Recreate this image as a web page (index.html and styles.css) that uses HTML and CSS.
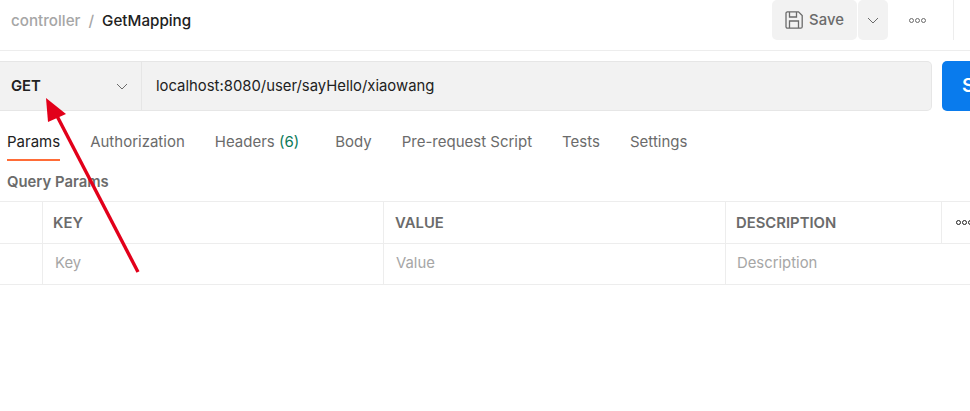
FILE: index.html
```html
<!DOCTYPE html>
<html lang="en">
<head>
    <meta charset="UTF-8">
    <title>GetMapping</title>
    <link rel="stylesheet" href="styles.css">
</head>
<body>
    <header class="top-bar">
        <div class="crumbs">
            <span class="crumb-parent">controller</span>
            <span class="crumb-sep">/</span>
            <span class="crumb-name">GetMapping</span>
        </div>
        <div class="actions">
            <div class="save-btn">
                <svg class="save-icon" width="18" height="18" viewBox="0 0 18 18" fill="none" stroke="#6b6b6b" stroke-width="1.3">
                    <path d="M2 .8h11.5l3.7 3.7v11.2a1.5 1.5 0 0 1-1.5 1.5h-13.2a1.5 1.5 0 0 1-1.5-1.5v-13.4a1.5 1.5 0 0 1 1.5-1.5z"/>
                    <path d="M4.5 1v5h7v-5"/>
                    <path d="M4.5 17v-7h9v7"/>
                </svg>
                <span>Save</span>
            </div>
            <div class="save-more">
                <svg width="12" height="7" viewBox="0 0 12 7" fill="none" stroke="#6b6b6b" stroke-width="1"><path d="M1 1l5 5 5-5"/></svg>
            </div>
            <div class="dots top-dots"><i></i><i></i><i></i></div>
            <div class="top-divider"></div>
        </div>
    </header>

    <section class="url-row">
        <div class="url-box">
            <div class="method">
                <span>GET</span>
                <svg width="12" height="7" viewBox="0 0 12 7" fill="none" stroke="#6b6b6b" stroke-width="1"><path d="M1 1l5 5 5-5"/></svg>
            </div>
            <div class="url-text">localhost:8080/user/sayHello/xiaowang</div>
        </div>
        <div class="send-btn">Send</div>
    </section>

    <nav class="tabs">
        <span class="tab active">Params</span>
        <span class="tab">Authorization</span>
        <span class="tab tab-headers">Headers <em>(6)</em></span>
        <span class="tab">Body</span>
        <span class="tab">Pre-request Script</span>
        <span class="tab">Tests</span>
        <span class="tab">Settings</span>
    </nav>

    <div class="section-title">Query Params</div>

    <div class="params-table">
        <div class="row head-row">
            <div class="cell check"></div>
            <div class="cell key">KEY</div>
            <div class="cell value">VALUE</div>
            <div class="cell desc">DESCRIPTION</div>
            <div class="cell more"><div class="dots dark"><i></i><i></i><i></i></div></div>
        </div>
        <div class="row body-row">
            <div class="cell check"></div>
            <div class="cell key">Key</div>
            <div class="cell value">Value</div>
            <div class="cell desc">Description</div>
        </div>
    </div>

    <!-- red arrow drawn on top of the screenshot -->
    <svg class="arrow" width="970" height="411" viewBox="0 0 970 411">
        <path d="M138 272L57 116" stroke="#e2001a" stroke-width="3.4" fill="none"/>
        <path d="M46 98L48 122 66 114z" fill="#e2001a"/>
    </svg>
</body>
</html>
```

FILE: styles.css
```css
body {
    margin: 0;
    width: 970px;
    height: 411px;
    overflow: hidden;
    position: relative;
    background-color: #fff;
    font-family: Inter, "Liberation Sans", sans-serif;
    font-size: 14.85px;
    color: #6b6b6b;
}

.top-bar {
    height: 50px;
    border-bottom: 1px solid #ededed;
    display: flex;
    justify-content: space-between;
    align-items: flex-start;
}

.crumbs {
    display: flex;
    gap: 8px;
    padding: 12px 0 0 11px;
    line-height: 18px;
    font-size: 15.2px;
    font-weight: 500;
}

.crumb-parent,
.crumb-sep {
    color: #a6a6a6;
}

.crumb-name {
    color: #212121;
}

.actions {
    display: flex;
    align-items: flex-start;
    margin-right: 16px;
}

.save-btn {
    width: 85px;
    height: 40px;
    margin-right: 1px;
    display: flex;
    align-items: center;
    justify-content: center;
    gap: 6px;
    background-color: #f2f2f2;
    border-radius: 5px;
    font-weight: 500;
}

.save-more {
    width: 30px;
    height: 40px;
    display: flex;
    align-items: center;
    justify-content: center;
    background-color: #f2f2f2;
    border-radius: 5px;
}

.dots {
    display: flex;
    gap: 1px;
}

.dots i {
    width: 3px;
    height: 3px;
    border: 1px solid #6b6b6b;
    border-radius: 50%;
}

.dots.dark i {
    border-color: #212121;
}

.top-dots {
    width: 65px;
    height: 40px;
    box-sizing: border-box;
    padding-left: 21px;
    align-items: center;
}

.top-divider {
    width: 1px;
    height: 40px;
    background-color: #ededed;
}

.url-row {
    display: flex;
    gap: 10px;
    margin-top: 10px;
    height: 50px;
}

.url-box {
    width: 932px;
    flex-shrink: 0;
    box-sizing: border-box;
    display: flex;
    background-color: #f2f2f2;
    border: 1px solid #e6e6e6;
    border-left: none;
    border-radius: 0 5px 5px 0;
}

.method {
    width: 142px;
    box-sizing: border-box;
    padding: 0 13px 0 11px;
    display: flex;
    align-items: center;
    justify-content: space-between;
    border-right: 1px solid #e6e6e6;
    color: #212121;
    font-weight: 600;
}

.url-text {
    padding-left: 14px;
    line-height: 48px;
    color: #212121;
}

.send-btn {
    width: 100px;
    flex-shrink: 0;
    background-color: #097bed;
    border-radius: 5px;
    color: #fff;
    font-size: 19px;
    font-weight: 600;
    line-height: 50px;
    padding-left: 20px;
}

.tabs {
    display: flex;
    gap: 30px;
    padding-left: 7px;
    margin-top: 19px;
    font-size: 15px;
}

.tab {
    height: 31px;
    line-height: 23px;
    box-sizing: border-box;
}

.tab-headers {
    margin-right: 6px;
}

.tab em {
    font-style: normal;
    color: #0c7a5a;
}

.tab.active {
    color: #212121;
    border-bottom: 2px solid #ff6c37;
}

.section-title {
    margin: 12px 0 0 7px;
    line-height: 18px;
    font-weight: 600;
}

.params-table {
    margin-top: 10px;
    border-top: 1px solid #ededed;
}

.row {
    display: flex;
    border-bottom: 1px solid #ededed;
}

.head-row {
    height: 41px;
    font-weight: 600;
    color: #6b6b6b;
}

.body-row {
    height: 40px;
    color: #a6a6a6;
}

.cell {
    box-sizing: border-box;
    display: flex;
    align-items: center;
    border-right: 1px solid #ededed;
    padding-left: 10px;
}

.check {
    width: 43px;
    padding: 0;
}

.key {
    width: 341px;
}

.value {
    width: 342px;
}

.desc {
    width: 216px;
}

.head-row .value {
    padding-left: 11px;
}

.body-row .cell {
    padding-bottom: 2px;
}

.body-row .key,
.body-row .value {
    padding-left: 12px;
}

.body-row .desc {
    padding-left: 11px;
    border-right: none;
}

.more {
    border-right: none;
    padding-left: 14px;
    width: 28px;
    overflow: hidden;
}

.more .dots {
    flex-shrink: 0;
}

.arrow {
    position: absolute;
    left: 0;
    top: 0;
}
```
